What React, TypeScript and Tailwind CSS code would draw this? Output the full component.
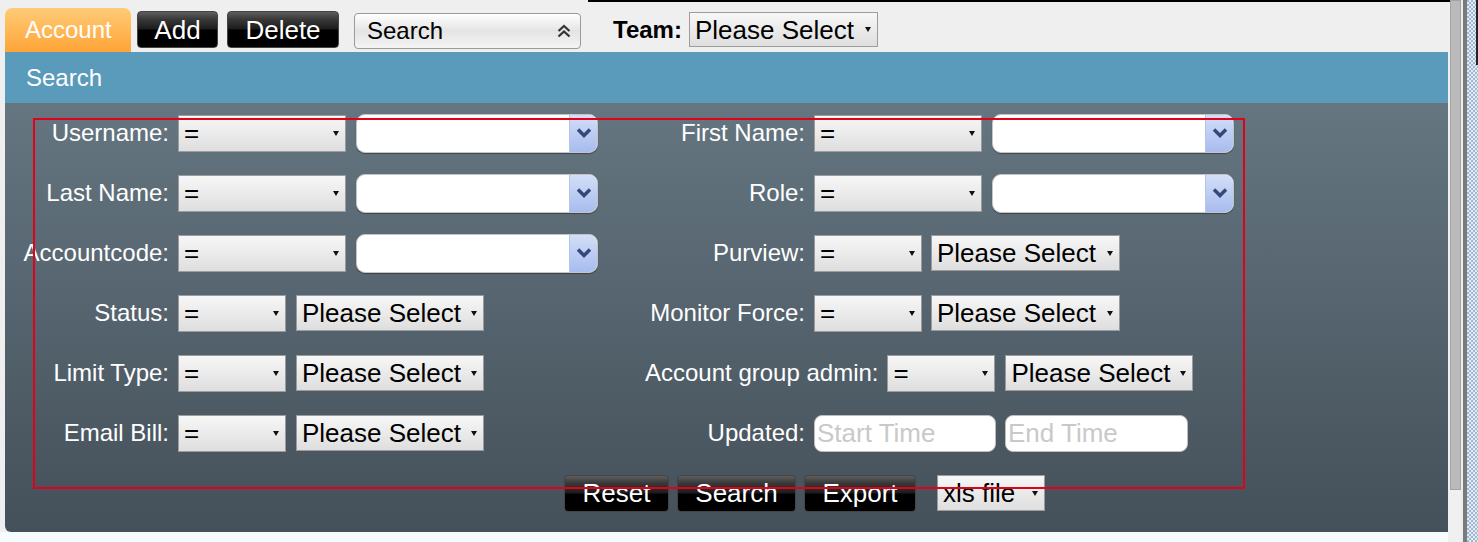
import React from "react";

const Arrow = () => (
  <svg width="6" height="5" viewBox="0 0 6 5" className="shrink-0">
    <path d="M0 0 L6 0 L3 5 Z" fill="#111" />
  </svg>
);

function Sel({ text, w, h = "h-[37px]" }: { text: string; w: string; h?: string }) {
  return (
    <div
      className={`${w} ${h} shrink-0 flex items-center justify-between pl-[5px] pr-[6px] border border-[#9c9c9c] bg-[linear-gradient(to_bottom,#f7f7f7,#dedede)] text-[26px] leading-none text-black whitespace-nowrap`}
    >
      <span>{text}</span>
      <Arrow />
    </div>
  );
}

function Combo() {
  return (
    <div className="w-[242px] h-[39px] shrink-0 flex bg-white border border-[#c4c4c4] rounded-[9px] overflow-hidden shadow-[0_1px_1px_rgba(0,0,0,0.35)]">
      <div className="flex-1" />
      <div className="w-[28px] h-[37px] flex items-center justify-center bg-[linear-gradient(to_bottom,#d3def8,#a7bcee)] border-l border-[#b5c5ea]">
        <svg width="16" height="12" viewBox="0 0 16 12">
          <path d="M2 2.5 L8 8.5 L14 2.5" fill="none" stroke="#34497a" strokeWidth="3.5" strokeLinejoin="miter" />
        </svg>
      </div>
    </div>
  );
}

function BlackBtn({ text, w, h = "h-[37px]" }: { text: string; w: string; h?: string }) {
  return (
    <div
      className={`${w} ${h} shrink-0 flex items-center justify-center rounded-[4px] border border-[#444] bg-[linear-gradient(to_bottom,#5e5e5e_0%,#3a3a3a_20%,#1c1c1c_48%,#000_52%,#000_100%)] text-white text-[26px] leading-none`}
    >
      {text}
    </div>
  );
}

function TimeInput({ ph, w }: { ph: string; w: string }) {
  return (
    <div className={`${w} h-[37px] shrink-0 flex items-center pl-[2px] bg-white border border-[#bdbdbd] rounded-[8px] text-[26px] leading-none text-[#c9c9c9]`}>
      {ph}
    </div>
  );
}

function Label({ text }: { text: string }) {
  return <div className="min-w-[160px] shrink-0 text-right whitespace-nowrap text-white text-[24px] leading-none">{text}</div>;
}

function Half({ label, children, left }: { label: string; children: React.ReactNode; left?: boolean }) {
  return (
    <div className={`${left ? "w-[636px]" : "flex-1"} flex items-center gap-[9px]`}>
      <Label text={label} />
      {children}
    </div>
  );
}

function Row({ children }: { children: React.ReactNode }) {
  return <div className="h-[60px] flex items-center">{children}</div>;
}

export default function App() {
  return (
    <div className="relative w-[1478px] h-[542px] flex overflow-hidden bg-[#efefef] font-['Liberation_Sans',Arial,sans-serif]">
      <div className="w-[1448px] flex flex-col">
        {/* top bar */}
        <div className="h-[52px] pl-[5px] flex items-start">
          <div className="mt-[8px] w-[126px] h-[44px] rounded-t-[7px] bg-[linear-gradient(to_bottom,#ffcb78,#ffa436)] flex items-center pl-[20px] text-white text-[24px] leading-none">
            Account
          </div>
          <div className="mt-[11px] ml-[6px]">
            <BlackBtn text="Add" w="w-[81px]" />
          </div>
          <div className="mt-[11px] ml-[9px]">
            <BlackBtn text="Delete" w="w-[112px]" />
          </div>
          <div className="mt-[13px] ml-[15px] w-[227px] h-[36px] rounded-[4px] border border-[#9a9a9a] bg-[linear-gradient(to_bottom,#ffffff_0%,#e4e4e4_50%,#f4f4f4_100%)] flex items-center justify-between pl-[12px] pr-[8px] text-[24px] leading-none text-black">
            <span>Search</span>
            <svg width="16" height="18" viewBox="0 0 16 18">
              <path d="M2.5 9 L8 4 L13.5 9 M2.5 14.5 L8 9.5 L13.5 14.5" fill="none" stroke="#333" strokeWidth="2.2" />
            </svg>
          </div>
          <div className="ml-[32px] mt-[12px] h-[35px] flex items-center gap-[7px]">
            <span className="font-bold text-[24px] leading-none text-black">Team:</span>
            <Sel text="Please Select" w="w-[189px]" h="h-[35px]" />
          </div>
        </div>

        {/* blue header */}
        <div className="ml-[5px] h-[51px] bg-[#5a9aba] flex items-center pl-[21px] text-white text-[24px] leading-none">
          Search
        </div>

        {/* form panel */}
        <div className="ml-[5px] h-[429px] rounded-bl-[6px] bg-[linear-gradient(to_bottom,#657681,#44505a)] pl-[4px] flex flex-col">
          <Row>
            <Half left label="Username:">
              <div className="flex items-center gap-[10px]">
                <Sel text="=" w="w-[168px]" />
                <Combo />
              </div>
            </Half>
            <Half label="First Name:">
              <div className="flex items-center gap-[10px]">
                <Sel text="=" w="w-[168px]" />
                <Combo />
              </div>
            </Half>
          </Row>
          <Row>
            <Half left label="Last Name:">
              <div className="flex items-center gap-[10px]">
                <Sel text="=" w="w-[168px]" />
                <Combo />
              </div>
            </Half>
            <Half label="Role:">
              <div className="flex items-center gap-[10px]">
                <Sel text="=" w="w-[168px]" />
                <Combo />
              </div>
            </Half>
          </Row>
          <Row>
            <Half left label="Accountcode:">
              <div className="flex items-center gap-[10px]">
                <Sel text="=" w="w-[168px]" />
                <Combo />
              </div>
            </Half>
            <Half label="Purview:">
              <div className="flex items-center gap-[9px]">
                <Sel text="=" w="w-[108px]" />
                <Sel text="Please Select" w="w-[189px]" h="h-[36px]" />
              </div>
            </Half>
          </Row>
          <Row>
            <Half left label="Status:">
              <div className="flex items-center gap-[10px]">
                <Sel text="=" w="w-[108px]" />
                <Sel text="Please Select" w="w-[188px]" h="h-[36px]" />
              </div>
            </Half>
            <Half label="Monitor Force:">
              <div className="flex items-center gap-[9px]">
                <Sel text="=" w="w-[108px]" />
                <Sel text="Please Select" w="w-[189px]" h="h-[36px]" />
              </div>
            </Half>
          </Row>
          <Row>
            <Half left label="Limit Type:">
              <div className="flex items-center gap-[10px]">
                <Sel text="=" w="w-[108px]" />
                <Sel text="Please Select" w="w-[188px]" h="h-[36px]" />
              </div>
            </Half>
            <Half label="Account group admin:">
              <div className="flex items-center gap-[10px]">
                <Sel text="=" w="w-[108px]" />
                <Sel text="Please Select" w="w-[188px]" h="h-[36px]" />
              </div>
            </Half>
          </Row>
          <Row>
            <Half left label="Email Bill:">
              <div className="flex items-center gap-[10px]">
                <Sel text="=" w="w-[108px]" />
                <Sel text="Please Select" w="w-[188px]" h="h-[36px]" />
              </div>
            </Half>
            <Half label="Updated:">
              <div className="flex items-center gap-[9px]">
                <TimeInput ph="Start Time" w="w-[182px]" />
                <TimeInput ph="End Time" w="w-[183px]" />
              </div>
            </Half>
          </Row>
          <div className="h-[60px] flex items-center pl-[555px] gap-[8px]">
            <BlackBtn text="Reset" w="w-[105px]" />
            <BlackBtn text="Search" w="w-[119px]" />
            <BlackBtn text="Export" w="w-[112px]" />
            <div className="ml-[13px]">
              <Sel text="xls file" w="w-[108px]" h="h-[36px]" />
            </div>
          </div>
        </div>

        <div className="flex-1 bg-[#f5fbff]" />
      </div>

      {/* scrollbar area */}
      <div className="w-[30px] flex">
        <div className="w-[2px] bg-[#f0f0f0]" />
        <div className="w-[11px] flex flex-col bg-[#f0f0f0]">
          <div className="h-[490px] bg-[#bababa] border border-[#a3a3a3]" />
        </div>
        <div className="w-[2px] bg-[#ececec]" />
        <div className="w-[4px] bg-[#7a7a7a]" />
        <div className="w-[11px] bg-[repeating-conic-gradient(#e3ecf5_0%_25%,#9fb7d1_0%_50%)] bg-[length:4px_4px]" />
      </div>

      {/* overlays */}
      <div className="absolute top-0 left-[588px] w-[862px] h-[2px] bg-black" />
      <div className="absolute top-0 right-0 w-[2px] h-[65px] bg-[#222]" />
      <div className="absolute left-[33px] top-[118px] w-[1212px] h-[371px] border-2 border-[#e2001a] pointer-events-none" />
    </div>
  );
}
